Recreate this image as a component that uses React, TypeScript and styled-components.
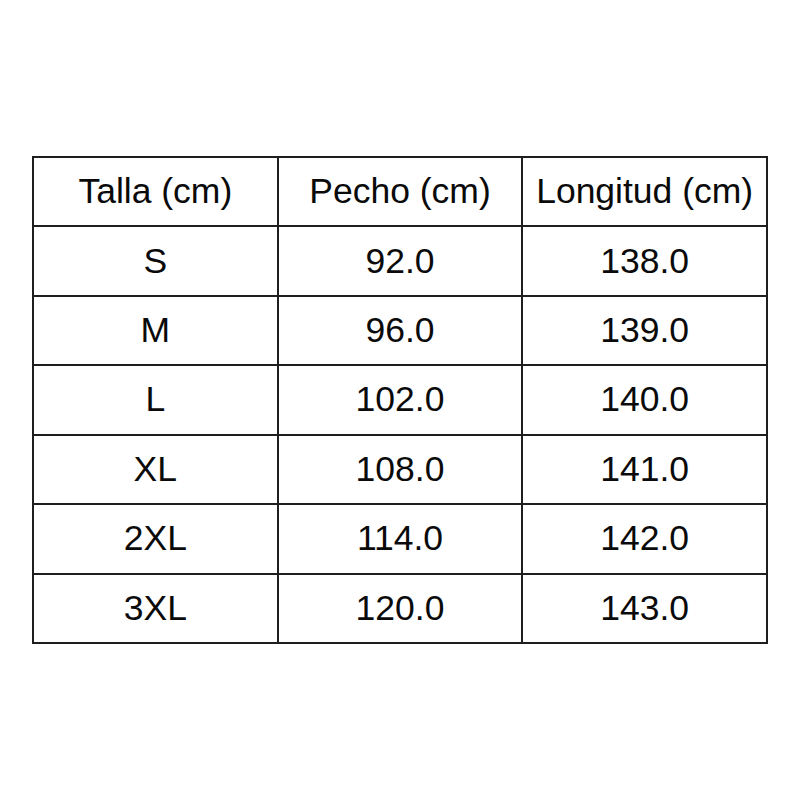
import React from 'react'
import styled, { createGlobalStyle } from 'styled-components'

const GlobalStyle = createGlobalStyle`
  body {
    margin: 0;
    background: #ffffff;
    font-family: "Liberation Sans", Arial, sans-serif;
  }
`

const Page = styled.div`
  width: 800px;
  height: 800px;
  padding: 156px 0 0 32px;
  box-sizing: border-box;
`

const Grid = styled.div`
  width: 736px;
  height: 488px;
  box-sizing: border-box;
  display: grid;
  grid-template-columns: repeat(3, 1fr);
  grid-template-rows: repeat(7, 1fr);
  gap: 2px;
  border: 2px solid #1e1e1e;
  background: #1e1e1e;
`

const Cell = styled.div`
  background: #ffffff;
  display: flex;
  align-items: center;
  justify-content: center;
  font-size: 35.5px;
  color: #0a0a0a;
`

const headers = ['Talla (cm)', 'Pecho (cm)', 'Longitud (cm)']

const rows = [
  ['S', '92.0', '138.0'],
  ['M', '96.0', '139.0'],
  ['L', '102.0', '140.0'],
  ['XL', '108.0', '141.0'],
  ['2XL', '114.0', '142.0'],
  ['3XL', '120.0', '143.0'],
]

const App = () => {
  return (
    <Page>
      <GlobalStyle />
      <Grid>
        {headers.map((h) => (
          <Cell key={h}>{h}</Cell>
        ))}
        {rows.map((r) =>
          r.map((v, i) => <Cell key={r[0] + i}>{v}</Cell>)
        )}
      </Grid>
    </Page>
  )
}

export default App
